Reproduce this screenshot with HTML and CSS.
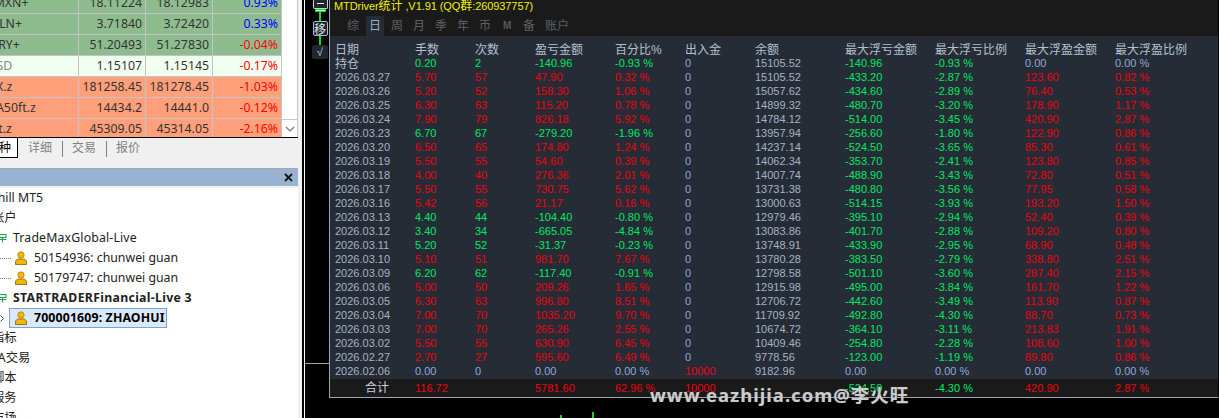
FILE: index.html
```html
<!DOCTYPE html>
<html lang="zh">
<head>
<meta charset="utf-8">
<title>MT5</title>
<link rel="stylesheet" href="styles.css">
</head>
<body>
<div class="app">
  <aside class="side">
    <div class="quotes">
      <div class="qrows">
        <div class="qrow green"><span class="sym">USDMXN+</span><span class="num">18.11224</span><span class="num">18.12983</span><span class="pct up">0.93%</span></div>
        <div class="qrow green"><span class="sym pln">USDPLN+</span><span class="num">3.71840</span><span class="num">3.72420</span><span class="pct up">0.33%</span></div>
        <div class="qrow green"><span class="sym try">USDTRY+</span><span class="num">51.20493</span><span class="num">51.27830</span><span class="pct dn">-0.04%</span></div>
        <div class="qrow pale"><span class="sym usd">EURUSD</span><span class="num">1.15107</span><span class="num">1.15145</span><span class="pct dn">-0.17%</span></div>
        <div class="qrow salmon"><span class="sym x">X.z</span><span class="num">181258.45</span><span class="num">181278.45</span><span class="pct dn">-1.03%</span></div>
        <div class="qrow salmon"><span class="sym a">A50ft.z</span><span class="num">14434.2</span><span class="num">14441.0</span><span class="pct dn">-0.12%</span></div>
        <div class="qrow salmon"><span class="sym t">ft.z</span><span class="num">45309.05</span><span class="num">45314.05</span><span class="pct dn">-2.16%</span></div>
      </div>
      <div class="scroll"><div class="scrollcell"><svg width="10" height="6" viewBox="0 0 10 6"><path d="M1 1l4 4 4-4" fill="none" stroke="#777" stroke-width="1.2"/></svg></div></div>
    </div>
    <div class="tabs">
      <span class="tab active"><span class="tabclip">种</span></span>
      <span class="tab">详细</span><i class="sep"></i>
      <span class="tab">交易</span><i class="sep"></i>
      <span class="tab">报价</span>
    </div>
    <div class="navhead"><svg width="9" height="9" viewBox="0 0 9 9"><path d="M1 1l7 7M8 1l-7 7" stroke="#111" stroke-width="1.8"/></svg></div>
    <div class="tree">
      <div class="node n-root">Churchill MT5</div>
      <div class="node n-root2">账户</div>
      <div class="node n-srv">
        <svg class="srv" width="7" height="9" viewBox="0 0 7 9"><path d="M0 .5h6v3H0M0 5.500h6.500M2.500 4v4.500" fill="none" stroke="#1fa64a" stroke-width="1.1"/></svg>
        TradeMaxGlobal-Live</div>
      <div class="node n-acc"><i class="dots"></i>
        <svg class="user" width="12" height="14" viewBox="0 0 12 14"><circle cx="6" cy="4" r="3.2" fill="#f7b500" stroke="#a97a00" stroke-width=".7"/><path d="M.5 13.500V11c0-1.800 1.700-3 3-3h5c1.300 0 3 1.200 3 3v2.500z" fill="#f7b500" stroke="#6b5200" stroke-width=".7"/></svg>
        50154936: chunwei guan</div>
      <div class="node n-acc"><i class="dots"></i>
        <svg class="user" width="12" height="14" viewBox="0 0 12 14"><circle cx="6" cy="4" r="3.2" fill="#f7b500" stroke="#a97a00" stroke-width=".7"/><path d="M.5 13.500V11c0-1.800 1.700-3 3-3h5c1.300 0 3 1.200 3 3v2.500z" fill="#f7b500" stroke="#6b5200" stroke-width=".7"/></svg>
        50179747: chunwei guan</div>
      <div class="node n-srv bold">
        <svg class="srv" width="7" height="9" viewBox="0 0 7 9"><path d="M0 .5h6v3H0M0 5.500h6.500M2.500 4v4.500" fill="none" stroke="#1fa64a" stroke-width="1.1"/></svg>
        STARTRADERFinancial-Live 3</div>
      <div class="node n-sel">
        <svg class="arrow" width="4" height="7" viewBox="0 0 4 7"><path d="M.5 .5l3 3-3 3" fill="none" stroke="#444"/></svg>
        <span class="selbox">
          <svg class="user" width="12" height="14" viewBox="0 0 12 14"><circle cx="6" cy="4" r="3.2" fill="#f7b500" stroke="#a97a00" stroke-width=".7"/><path d="M.5 13.500V11c0-1.800 1.700-3 3-3h5c1.300 0 3 1.200 3 3v2.500z" fill="#f7b500" stroke="#6b5200" stroke-width=".7"/></svg>
          700001609: ZHAOHUI</span></div>
      <div class="node n-cat">指标</div>
      <div class="node n-cat ea">EA交易</div>
      <div class="node n-cat">脚本</div>
      <div class="node n-cat">服务</div>
      <div class="node n-cat">市场</div>
    </div>
  </aside>

  <main class="chart">
    <div class="tools">
      <button class="minbtn"><i></i></button>
      <i class="slider"></i>
      <span class="movebtn">移</span>
      <span class="checkbtn">√</span>
    </div>
    <section class="panel">
      <div class="head">
        <div class="title">MTDriver<span class="cjk">统计</span> ,V1.91 (QQ<span class="cjk">群</span>:260937757)</div>
        <div class="nav">
          <span>综</span><span class="on">日</span><span>周</span><span>月</span><span>季</span><span>年</span><span>币</span><span class="m">M</span><span>备</span><span class="acct">账户</span>
        </div>
      </div>
      <div class="body">
        <div class="row th"><span>日期</span><span>手数</span><span>次数</span><span>盈亏金额</span><span>百分比%</span><span>出入金</span><span>余额</span><span>最大浮亏金额</span><span>最大浮亏比例</span><span>最大浮盈金额</span><span>最大浮盈比例</span></div>
        <div class="row"><span class="hold">持仓</span><span class="g">0.20</span><span class="g">2</span><span class="g">-140.96</span><span class="g">-0.93 %</span><span class="b">0</span><span class="n">15105.52</span><span class="g">-140.96</span><span class="g">-0.93 %</span><span class="b">0.00</span><span class="b">0.00 %</span></div>
        <div class="row"><span class="n">2026.03.27</span><span class="r">5.70</span><span class="r">57</span><span class="r">47.90</span><span class="r">0.32 %</span><span class="b">0</span><span class="n">15105.52</span><span class="g">-433.20</span><span class="g">-2.87 %</span><span class="r">123.60</span><span class="r">0.82 %</span></div>
        <div class="row"><span class="n">2026.03.26</span><span class="r">5.20</span><span class="r">52</span><span class="r">158.30</span><span class="r">1.06 %</span><span class="b">0</span><span class="n">15057.62</span><span class="g">-434.60</span><span class="g">-2.89 %</span><span class="r">76.40</span><span class="r">0.53 %</span></div>
        <div class="row"><span class="n">2026.03.25</span><span class="r">6.30</span><span class="r">63</span><span class="r">115.20</span><span class="r">0.78 %</span><span class="b">0</span><span class="n">14899.32</span><span class="g">-480.70</span><span class="g">-3.20 %</span><span class="r">178.90</span><span class="r">1.17 %</span></div>
        <div class="row"><span class="n">2026.03.24</span><span class="r">7.90</span><span class="r">79</span><span class="r">826.18</span><span class="r">5.92 %</span><span class="b">0</span><span class="n">14784.12</span><span class="g">-514.00</span><span class="g">-3.45 %</span><span class="r">420.90</span><span class="r">2.87 %</span></div>
        <div class="row"><span class="n">2026.03.23</span><span class="g">6.70</span><span class="g">67</span><span class="g">-279.20</span><span class="g">-1.96 %</span><span class="b">0</span><span class="n">13957.94</span><span class="g">-256.60</span><span class="g">-1.80 %</span><span class="r">122.90</span><span class="r">0.86 %</span></div>
        <div class="row"><span class="n">2026.03.20</span><span class="r">6.50</span><span class="r">65</span><span class="r">174.80</span><span class="r">1.24 %</span><span class="b">0</span><span class="n">14237.14</span><span class="g">-524.50</span><span class="g">-3.65 %</span><span class="r">85.30</span><span class="r">0.61 %</span></div>
        <div class="row"><span class="n">2026.03.19</span><span class="r">5.50</span><span class="r">55</span><span class="r">54.60</span><span class="r">0.39 %</span><span class="b">0</span><span class="n">14062.34</span><span class="g">-353.70</span><span class="g">-2.41 %</span><span class="r">123.80</span><span class="r">0.85 %</span></div>
        <div class="row"><span class="n">2026.03.18</span><span class="r">4.00</span><span class="r">40</span><span class="r">276.36</span><span class="r">2.01 %</span><span class="b">0</span><span class="n">14007.74</span><span class="g">-488.90</span><span class="g">-3.43 %</span><span class="r">72.80</span><span class="r">0.51 %</span></div>
        <div class="row"><span class="n">2026.03.17</span><span class="r">5.50</span><span class="r">55</span><span class="r">730.75</span><span class="r">5.62 %</span><span class="b">0</span><span class="n">13731.38</span><span class="g">-480.80</span><span class="g">-3.56 %</span><span class="r">77.95</span><span class="r">0.58 %</span></div>
        <div class="row"><span class="n">2026.03.16</span><span class="r">5.42</span><span class="r">56</span><span class="r">21.17</span><span class="r">0.16 %</span><span class="b">0</span><span class="n">13000.63</span><span class="g">-514.15</span><span class="g">-3.93 %</span><span class="r">193.20</span><span class="r">1.50 %</span></div>
        <div class="row"><span class="n">2026.03.13</span><span class="g">4.40</span><span class="g">44</span><span class="g">-104.40</span><span class="g">-0.80 %</span><span class="b">0</span><span class="n">12979.46</span><span class="g">-395.10</span><span class="g">-2.94 %</span><span class="r">52.40</span><span class="r">0.39 %</span></div>
        <div class="row"><span class="n">2026.03.12</span><span class="g">3.40</span><span class="g">34</span><span class="g">-665.05</span><span class="g">-4.84 %</span><span class="b">0</span><span class="n">13083.86</span><span class="g">-401.70</span><span class="g">-2.88 %</span><span class="r">109.20</span><span class="r">0.80 %</span></div>
        <div class="row"><span class="n">2026.03.11</span><span class="g">5.20</span><span class="g">52</span><span class="g">-31.37</span><span class="g">-0.23 %</span><span class="b">0</span><span class="n">13748.91</span><span class="g">-433.90</span><span class="g">-2.95 %</span><span class="r">68.90</span><span class="r">0.48 %</span></div>
        <div class="row"><span class="n">2026.03.10</span><span class="r">5.10</span><span class="r">51</span><span class="r">981.70</span><span class="r">7.67 %</span><span class="b">0</span><span class="n">13780.28</span><span class="g">-383.50</span><span class="g">-2.79 %</span><span class="r">338.80</span><span class="r">2.51 %</span></div>
        <div class="row"><span class="n">2026.03.09</span><span class="g">6.20</span><span class="g">62</span><span class="g">-117.40</span><span class="g">-0.91 %</span><span class="b">0</span><span class="n">12798.58</span><span class="g">-501.10</span><span class="g">-3.60 %</span><span class="r">287.40</span><span class="r">2.15 %</span></div>
        <div class="row"><span class="n">2026.03.06</span><span class="r">5.00</span><span class="r">50</span><span class="r">209.26</span><span class="r">1.65 %</span><span class="b">0</span><span class="n">12915.98</span><span class="g">-495.00</span><span class="g">-3.84 %</span><span class="r">161.70</span><span class="r">1.22 %</span></div>
        <div class="row"><span class="n">2026.03.05</span><span class="r">6.30</span><span class="r">63</span><span class="r">996.80</span><span class="r">8.51 %</span><span class="b">0</span><span class="n">12706.72</span><span class="g">-442.60</span><span class="g">-3.49 %</span><span class="r">113.90</span><span class="r">0.87 %</span></div>
        <div class="row"><span class="n">2026.03.04</span><span class="r">7.00</span><span class="r">70</span><span class="r">1035.20</span><span class="r">9.70 %</span><span class="b">0</span><span class="n">11709.92</span><span class="g">-492.80</span><span class="g">-4.30 %</span><span class="r">88.70</span><span class="r">0.73 %</span></div>
        <div class="row"><span class="n">2026.03.03</span><span class="r">7.00</span><span class="r">70</span><span class="r">265.26</span><span class="r">2.55 %</span><span class="b">0</span><span class="n">10674.72</span><span class="g">-364.10</span><span class="g">-3.11 %</span><span class="r">213.83</span><span class="r">1.91 %</span></div>
        <div class="row"><span class="n">2026.03.02</span><span class="r">5.50</span><span class="r">55</span><span class="r">630.90</span><span class="r">6.45 %</span><span class="b">0</span><span class="n">10409.46</span><span class="g">-254.80</span><span class="g">-2.28 %</span><span class="r">108.60</span><span class="r">1.00 %</span></div>
        <div class="row"><span class="n">2026.02.27</span><span class="r">2.70</span><span class="r">27</span><span class="r">595.60</span><span class="r">6.49 %</span><span class="b">0</span><span class="n">9778.56</span><span class="g">-123.00</span><span class="g">-1.19 %</span><span class="r">89.80</span><span class="r">0.86 %</span></div>
        <div class="row"><span class="n">2026.02.06</span><span class="b">0.00</span><span class="b">0</span><span class="b">0.00</span><span class="b">0.00 %</span><span class="r">10000</span><span class="n">9182.96</span><span class="b">0.00</span><span class="b">0.00 %</span><span class="b">0.00</span><span class="b">0.00 %</span></div>
      </div>
      <div class="row total"><span class="sum">合计</span><span class="r">116.72</span><span></span><span class="r">5781.60</span><span class="r">62.96 %</span><span class="r">10000</span><span></span><span class="g">-524.50</span><span class="g">-4.30 %</span><span class="r">420.90</span><span class="r">2.87 %</span></div>
    </section>
    <div class="candles"><i class="w1"></i><i class="w2"></i></div>
    <div class="mark">www.eazhijia.com@李火旺</div>
  </main>
</div>
</body>
</html>
```
FILE: styles.css
```css
* { box-sizing: border-box; }
html, body { margin: 0; height: 100%; overflow: hidden; background: #000; }
.app { display: flex; width: 1219px; height: 418px; overflow: hidden; }

/* left column */
.side { width: 302px; flex: none; height: 418px; overflow: hidden; background: #f0f0f0; padding-right: 4px;
  font-family: "Noto Sans", "Noto Sans CJK SC", sans-serif; font-size: 12.3px; color: #222; }
.quotes { display: flex; height: 138px; overflow: hidden; border-bottom: 1px solid #000; background: #fff; }
.qrows { width: 282px; flex: none; margin-top: -7px; }
.qrow { display: grid; grid-template-columns: 79px 67px 67px 69px; height: 21px; border-bottom: 1px solid #c4c4c4; line-height: 20px; color: #333; }
.qrow span { border-right: 1px solid #c4c4c4; overflow: hidden; white-space: nowrap; }
.green { background: #8fbc8f; }
.pale { background: #f0fff0; }
.salmon { background: #ffa07a; }
.num, .pct { text-align: right; padding-right: 3px; }
.sym { text-indent: -31px; }
.sym.pln { text-indent: -33px; }
.sym.try { text-indent: -33px; }
.sym.usd { text-indent: -36px; color: #888; }
.sym.x { text-indent: -4px; }
.sym.a { text-indent: -4px; }
.sym.t { text-indent: -6px; }
.up { color: #0000ff; }
.dn { color: #ff0000; }
.scroll { flex: 1; border-right: 1px solid #c8c8c8; display: flex; align-items: flex-end; }
.scrollcell { flex: 1; height: 18px; border-top: 1px solid #c8c8c8; display: flex; align-items: center; justify-content: center; }

.tabs { height: 30px; background: #f0f0f0; display: flex; align-items: flex-start; color: #808080; font-size: 12px; }
.tab { height: 20px; line-height: 19px; margin-right: 10px; white-space: nowrap; }
.tab.active { width: 18px; background: #fff; border-right: 1px solid #000; border-bottom: 1px solid #000; color: #000; overflow: hidden; }
.tabclip { display: block; margin-left: -1px; }
.sep { width: 1px; height: 16px; margin: 3px 9px 0 0; background: #808080; }

.navhead { height: 18px; background: #98b3d2; border-top: 1px solid #a8a8a8; display: flex; justify-content: flex-end; align-items: center; padding-right: 5px; }
.tree { margin-top: 2px; background: #fff; height: 230px; }
.node { height: 20px; line-height: 20px; white-space: nowrap; display: flex; align-items: center; }
.n-root { width: 43px; justify-content: flex-end; }
.n-root2 { margin-left: -8px; }
.n-srv { gap: 6px; letter-spacing: .15px; }
.srv { flex: none; }
.bold { font-weight: 700; letter-spacing: .3px; }
.dots { width: 11px; border-top: 1px dotted #777; flex: none; margin-right: 4px; }
.user { flex: none; margin-right: 7px; }
.arrow { flex: none; margin-right: 5px; }
.selbox { display: flex; align-items: center; height: 20px; width: 158px; padding-left: 5px; background: #d9e8fb; border: 1px solid #7da2ce; font-weight: 700; color: #000; letter-spacing: .15px; }
.n-cat { margin-left: -8px; }
.n-cat.ea { margin-left: -9px; }

/* chart */
.chart { position: relative; flex: 1; height: 418px; background: #000; display: flex; padding-left: 2px; }
.chart::before { content: ""; width: 1px; background: #fff; flex: none; }
.tools { position: relative; width: 24px; flex: none; display: flex; flex-direction: column; align-items: center; padding-left: 6px; }
.tools::before { content: ""; position: absolute; left: 14px; top: 11px; width: 2px; height: 36px; background: #00e020; }
.tools::after { content: ""; position: absolute; left: 0; right: 0; top: 363px; height: 1px; background: #9aa4b2; }
.minbtn { position: relative; width: 15px; height: 10px; padding: 0; margin: -1px 0 0; border: 1px solid #c8d0dc; border-top: 0; border-radius: 0 0 2px 2px; background: #23282f; display: flex; align-items: center; justify-content: center; }
.minbtn i { width: 7px; height: 1px; background: #fff; }
.slider { position: relative; width: 11px; height: 3px; background: #fff; border: 1px solid #00e020; }
.movebtn { position: relative; margin-top: 9px; width: 15px; height: 15px; border: 1px solid #a9b4c4; border-radius: 2px; background: #22262c; color: #dfe5ee; font: 12px/13px "Noto Sans CJK SC", sans-serif; text-align: center; }
.checkbtn { position: relative; margin-top: 9px; width: 16px; height: 14px; border-radius: 2px; background: #22262c; color: #7fa4c8; font: 700 11px/14px "Liberation Sans", sans-serif; text-align: center; }

.panel { width: 890px; flex: none; height: 398px; border-left: 1px solid #9aa4b2; border-bottom: 1px solid #9aa4b2; border-right: 1px solid #000; background: #262c35; display: flex; flex-direction: column;
  font-family: "Liberation Sans", "Noto Sans CJK SC", sans-serif; font-size: 11px; }
.head { height: 36px; flex: none; background: #1a1a1a; }
.title { height: 18px; line-height: 13px; padding-left: 4px; color: #f0f000; font-size: 11px; letter-spacing: -.08px; }
.cjk { font-size: 12px; }
.nav { display: flex; padding-left: 17px; height: 18px; font-size: 12px; line-height: 16px; color: #5c6168; }
.nav span { width: 22px; flex: none; }
.nav .on { width: 18px; margin: -2px 7px 0 -3px; padding-left: 3px; height: 20px; line-height: 20px; background: #262c35; color: #a0aec0; border-radius: 2px 2px 0 0; }
.nav .m { font-weight: 700; font-size: 10px; padding-left: 2px; color: #55595f; }
.nav .acct { width: 30px; }
.body { height: 343px; flex: none; padding-top: 6px; }
.row { display: grid; grid-template-columns: 80px 60px 60px 80px 70px 70px 90px 90px 90px 90px 1fr; height: 14px; line-height: 14px; padding-left: 5px; white-space: nowrap; }
.th { color: #b4c0d0; font-size: 12px; }
.th span { padding-top: 1px; }
.hold { color: #b4c0d0; font-size: 12px; padding-top: 1px; }
.n { color: #a6b2c4; }
.b { color: #8fa9d6; }
.g { color: #00e866; }
.r { color: #f00010; }
.total { height: 18px; line-height: 18px; background: #1a1a1a; flex: none; }
.sum { color: #c8d0dc; font-size: 12px; padding-left: 30px; }

.candles i { position: absolute; width: 2px; background: #2ecc2e; bottom: 0; }
.w1 { left: 258px; height: 3px; }
.w2 { left: 290px; height: 6px; }
.mark { position: absolute; left: 348px; top: 384px; color: rgba(222,222,222,.88); font: 700 18.5px/22px "Noto Sans", "Noto Sans CJK SC", sans-serif; letter-spacing: 1px; white-space: nowrap; text-shadow: 0 0 1px #555; }
```
